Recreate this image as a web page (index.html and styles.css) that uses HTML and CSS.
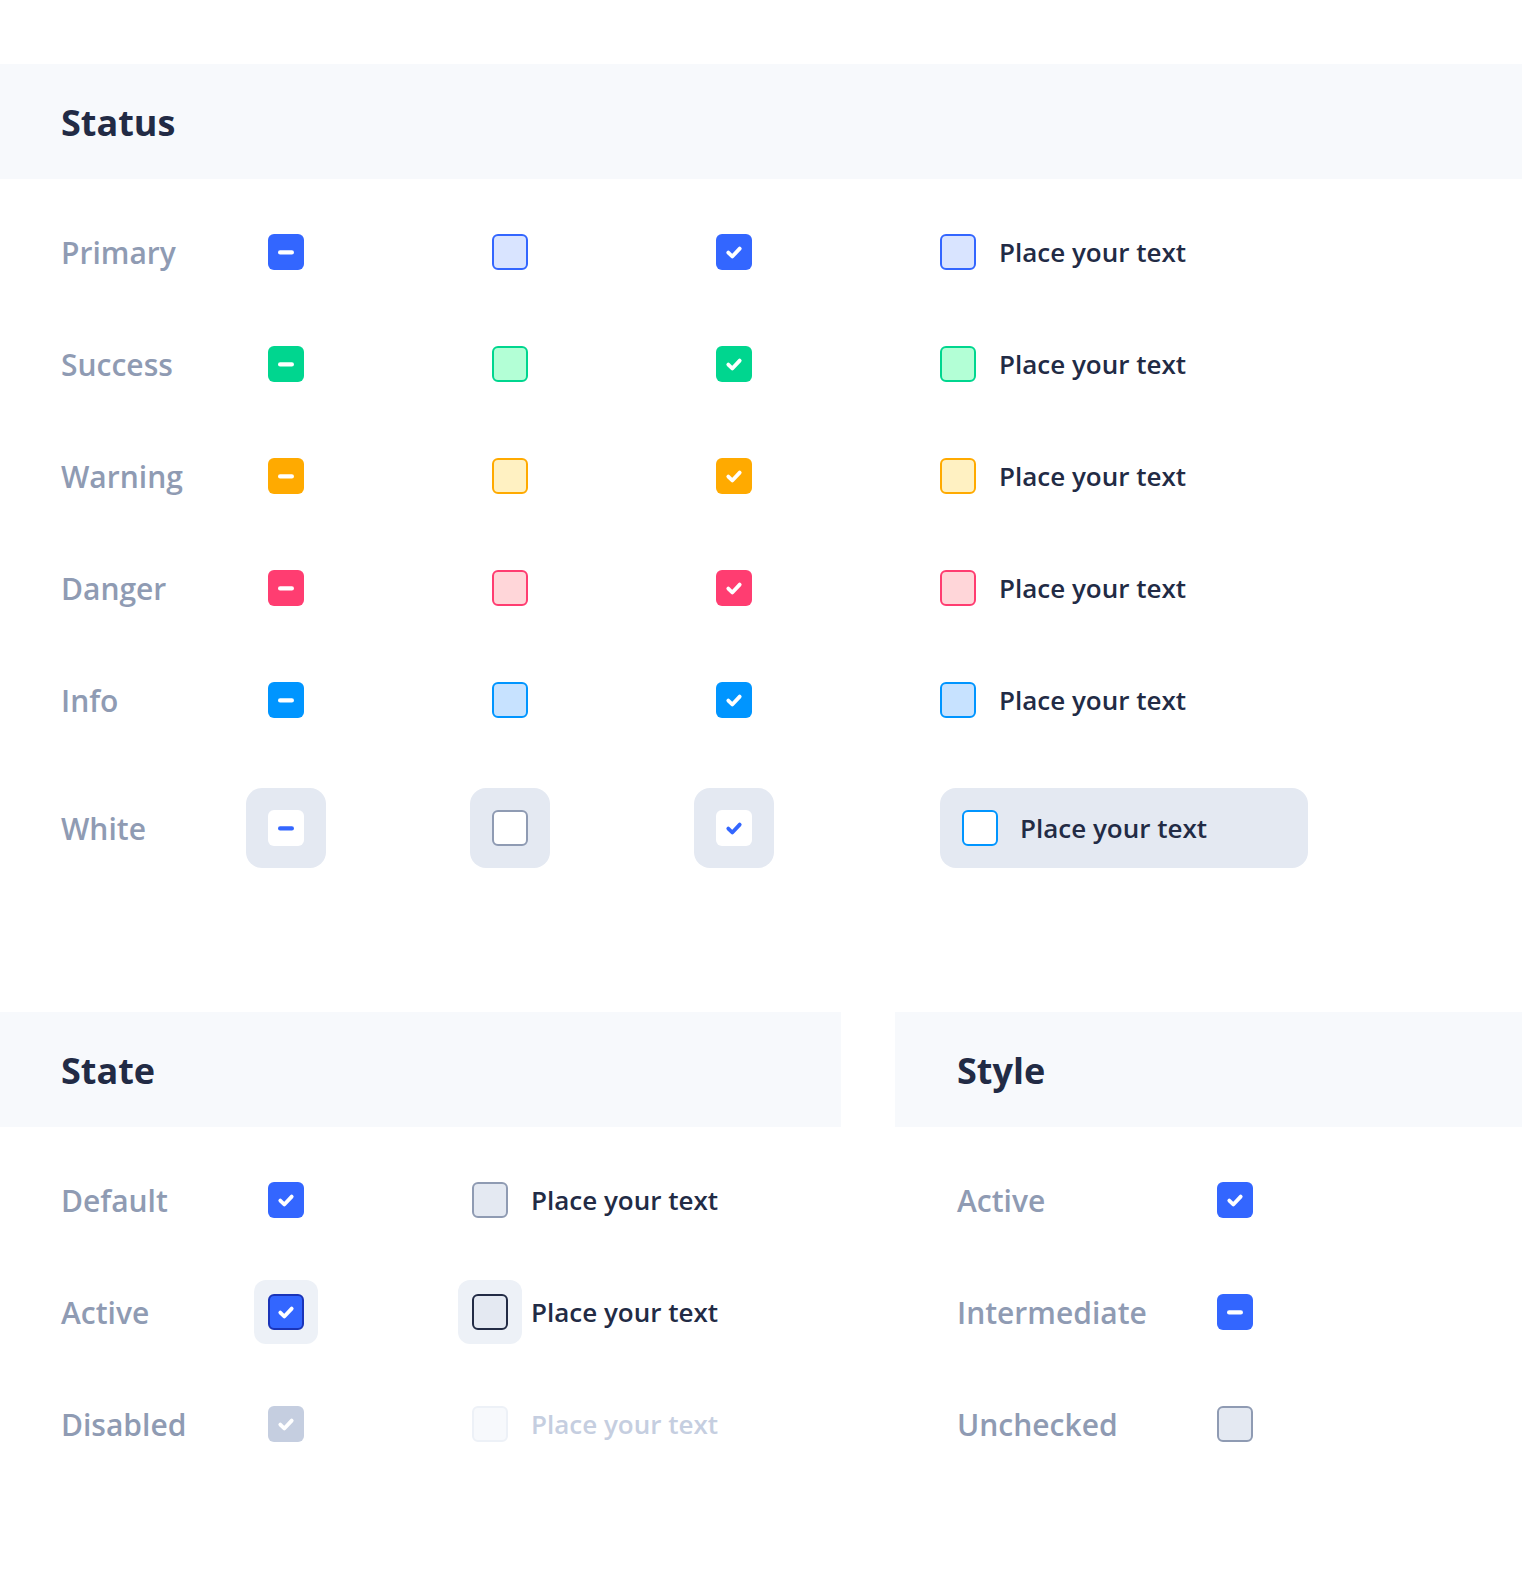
FILE: index.html
```html
<!DOCTYPE html>
<html lang="en">
<head>
<meta charset="utf-8">
<title>Checkbox</title>
<link rel="stylesheet" href="styles.css">
</head>
<body>
<svg width="0" height="0" class="defs" aria-hidden="true">
  <symbol id="i-check" viewBox="0 0 36 36"><path d="M12.3 18.6 L16.3 22.5 L23.7 14.6" fill="none" stroke="currentColor" stroke-width="3.8" stroke-linecap="round" stroke-linejoin="round"/></symbol>
  <symbol id="i-minus" viewBox="0 0 36 36"><rect x="10" y="16.3" width="16" height="4.2" rx="2.1" fill="currentColor"/></symbol>
</svg>

<section class="status">
  <header class="band"><h2 class="title">Status</h2></header>
  <div class="status-body">
    <div class="srow">
      <span class="label">Primary</span>
      <div class="cell"><span class="cb fill primary"><svg class="ico"><use href="#i-minus"/></svg></span></div>
      <div class="cell"><span class="cb light primary"></span></div>
      <div class="cell"><span class="cb fill primary"><svg class="ico"><use href="#i-check"/></svg></span></div>
      <div class="cell-text"><span class="cb light primary"></span><span class="txt">Place your text</span></div>
    </div>
    <div class="srow">
      <span class="label">Success</span>
      <div class="cell"><span class="cb fill success"><svg class="ico"><use href="#i-minus"/></svg></span></div>
      <div class="cell"><span class="cb light success"></span></div>
      <div class="cell"><span class="cb fill success"><svg class="ico"><use href="#i-check"/></svg></span></div>
      <div class="cell-text"><span class="cb light success"></span><span class="txt">Place your text</span></div>
    </div>
    <div class="srow">
      <span class="label">Warning</span>
      <div class="cell"><span class="cb fill warning"><svg class="ico"><use href="#i-minus"/></svg></span></div>
      <div class="cell"><span class="cb light warning"></span></div>
      <div class="cell"><span class="cb fill warning"><svg class="ico"><use href="#i-check"/></svg></span></div>
      <div class="cell-text"><span class="cb light warning"></span><span class="txt">Place your text</span></div>
    </div>
    <div class="srow">
      <span class="label">Danger</span>
      <div class="cell"><span class="cb fill danger"><svg class="ico"><use href="#i-minus"/></svg></span></div>
      <div class="cell"><span class="cb light danger"></span></div>
      <div class="cell"><span class="cb fill danger"><svg class="ico"><use href="#i-check"/></svg></span></div>
      <div class="cell-text"><span class="cb light danger"></span><span class="txt">Place your text</span></div>
    </div>
    <div class="srow">
      <span class="label">Info</span>
      <div class="cell"><span class="cb fill info"><svg class="ico"><use href="#i-minus"/></svg></span></div>
      <div class="cell"><span class="cb light info"></span></div>
      <div class="cell"><span class="cb fill info"><svg class="ico"><use href="#i-check"/></svg></span></div>
      <div class="cell-text"><span class="cb light info"></span><span class="txt">Place your text</span></div>
    </div>
    <div class="srow srow-white">
      <span class="label">White</span>
      <div class="cell"><span class="wpad"><span class="cb white"><svg class="ico"><use href="#i-minus"/></svg></span></span></div>
      <div class="cell"><span class="wpad"><span class="cb white outline"></span></span></div>
      <div class="cell"><span class="wpad"><span class="cb white"><svg class="ico"><use href="#i-check"/></svg></span></span></div>
      <div class="cell-text wbar"><span class="cb white info-outline"></span><span class="txt">Place your text</span></div>
    </div>
  </div>
</section>

<div class="bottom">
  <section class="state">
    <header class="band"><h2 class="title">State</h2></header>
    <div class="state-body">
      <div class="trow">
        <span class="label">Default</span>
        <div class="tcell"><span class="cb fill primary"><svg class="ico"><use href="#i-check"/></svg></span></div>
        <div class="cell-text"><span class="cb basic"></span><span class="txt">Place your text</span></div>
      </div>
      <div class="trow">
        <span class="label">Active</span>
        <div class="tcell"><span class="ring"><span class="cb fill primary active"><svg class="ico"><use href="#i-check"/></svg></span></span></div>
        <div class="cell-text"><span class="ring"><span class="cb basic active"></span></span><span class="txt">Place your text</span></div>
      </div>
      <div class="trow">
        <span class="label">Disabled</span>
        <div class="tcell"><span class="cb disabled-fill"><svg class="ico"><use href="#i-check"/></svg></span></div>
        <div class="cell-text"><span class="cb disabled"></span><span class="txt txt-disabled">Place your text</span></div>
      </div>
    </div>
  </section>

  <section class="style">
    <header class="band band-style"><h2 class="title">Style</h2></header>
    <div class="style-body">
      <div class="yrow">
        <span class="label">Active</span>
        <span class="cb fill primary"><svg class="ico"><use href="#i-check"/></svg></span>
      </div>
      <div class="yrow">
        <span class="label">Intermediate</span>
        <span class="cb fill primary"><svg class="ico"><use href="#i-minus"/></svg></span>
      </div>
      <div class="yrow">
        <span class="label">Unchecked</span>
        <span class="cb basic"></span>
      </div>
    </div>
  </section>
</div>
</body>
</html>
```

FILE: styles.css
```css
* { box-sizing: border-box; }

html, body {
  margin: 0;
  padding: 0;
  background: #ffffff;
}

body {
  font-family: "Open Sans", "Noto Sans", sans-serif;
  color: #222B45;
  width: 1522px;
  overflow-x: hidden;
}

.defs { position: absolute; width: 0; height: 0; overflow: hidden; }

.band {
  background: #F7F9FC;
  height: 115px;
  display: flex;
  align-items: center;
  padding-left: 61px;
}

.title {
  margin: 0;
  font-size: 36px;
  font-weight: 700;
  line-height: 1;
  color: #222B45;
  padding-top: 3px;
}

.status { margin-top: 64px; }

.status-body {
  padding: 17px 0 0 61px;
}

.srow {
  display: grid;
  grid-template-columns: 207px 224px 224px 224px auto;
  align-items: center;
  height: 112px;
}

.srow-white { height: 144px; }

.label {
  font-size: 30px;
  font-weight: 600;
  color: #8F9BB3;
  line-height: 1;
  white-space: nowrap;
  padding-top: 1px;
}

.cell { display: flex; align-items: center; }

.cell-text {
  display: flex;
  align-items: center;
  gap: 23px;
}

.txt {
  font-size: 26px;
  font-weight: 600;
  color: #222B45;
  line-height: 1;
  white-space: nowrap;
}

.txt-disabled { color: #C5CEE0; }

/* checkbox */
.cb {
  width: 36px;
  height: 36px;
  border-radius: 6px;
  display: flex;
  align-items: center;
  justify-content: center;
  flex: none;
  color: #ffffff;
}

.ico { width: 36px; height: 36px; display: block; flex: none; }
.cb[class*="light"] .ico,
.basic .ico,
.outline .ico,
.disabled .ico,
.active .ico { margin: -2px; }

.fill.primary { background: #3366FF; }
.fill.success { background: #00D68F; }
.fill.warning { background: #FFAA00; }
.fill.danger  { background: #FF3D71; }
.fill.info    { background: #0095FF; }

.light { border: 2px solid; }
.light.primary { background: #D9E4FF; border-color: #3366FF; }
.light.success { background: #B3FFD6; border-color: #00D68F; }
.light.warning { background: #FFF1C2; border-color: #FFAA00; }
.light.danger  { background: #FFD6D9; border-color: #FF3D71; }
.light.info    { background: #C7E2FF; border-color: #0095FF; }

.white { background: #ffffff; color: #3366FF; }
.white.outline { border: 2px solid #8F9BB3; }
.white.info-outline { border: 2px solid #0095FF; }

.wpad {
  display: flex;
  align-items: center;
  justify-content: center;
  width: 80px;
  height: 80px;
  margin-left: -22px;
  background: #E4E9F2;
  border-radius: 16px;
}

.wbar {
  width: 368px;
  height: 80px;
  background: #E4E9F2;
  border-radius: 16px;
  padding-left: 22px;
  gap: 22px;
}

.basic { background: #E4E9F2; border: 2px solid #8F9BB3; }
.basic.active { background: #E4E9F2; border-color: #222B45; }
.fill.primary.active { border: 2px solid #1A34B8; }

.disabled-fill { background: #C5CEE0; }
.disabled { background: #F7F9FC; border: 2px solid #EDF1F7; }

.ring {
  display: flex;
  align-items: center;
  justify-content: center;
  width: 64px;
  height: 64px;
  margin: -14px;
  background: #EDF1F7;
  border-radius: 12px;
  flex: none;
}

/* bottom */
.bottom {
  margin-top: 112px;
  display: grid;
  grid-template-columns: 841px 627px;
  column-gap: 54px;
}

.band-style { padding-left: 62px; }

.state-body { padding: 17px 0 0 61px; }

.trow {
  display: grid;
  grid-template-columns: 207px 204px auto;
  align-items: center;
  height: 112px;
}

.tcell { display: flex; align-items: center; }

.style-body { padding: 17px 0 0 62px; }

.yrow {
  display: grid;
  grid-template-columns: 260px auto;
  align-items: center;
  height: 112px;
}
```
